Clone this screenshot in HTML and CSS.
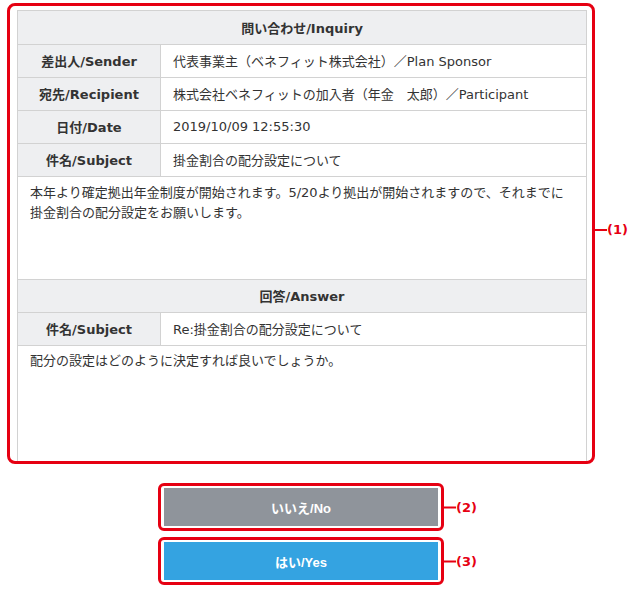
FILE: index.html
```html
<!DOCTYPE html>
<html lang="ja">
<head>
    <meta charset="UTF-8">
    <meta name="viewport" content="width=device-width">
    <title>問い合わせ</title>
    <link rel="stylesheet" href="styles.css">
</head>
<body>
<div class="page">
    <div class="frame">
        <div class="sheet">
            <div class="sec-head">問い合わせ/Inquiry</div>
            <div class="row">
                <div class="label">差出人/Sender</div>
                <div class="value">代表事業主（ベネフィット株式会社）／Plan Sponsor</div>
            </div>
            <div class="row">
                <div class="label">宛先/Recipient</div>
                <div class="value">株式会社ベネフィットの加入者（年金　太郎）／Participant</div>
            </div>
            <div class="row">
                <div class="label">日付/Date</div>
                <div class="value">2019/10/09 12:55:30</div>
            </div>
            <div class="row">
                <div class="label">件名/Subject</div>
                <div class="value">掛金割合の配分設定について</div>
            </div>
            <div class="msg">本年より確定拠出年金制度が開始されます。5/20より拠出が開始されますので、それまでに<br>掛金割合の配分設定をお願いします。</div>

            <div class="sec-head sec-answer">回答/Answer</div>
            <div class="row">
                <div class="label">件名/Subject</div>
                <div class="value">Re:掛金割合の配分設定について</div>
            </div>
            <div class="msg msg-last">配分の設定はどのように決定すれば良いでしょうか。</div>
        </div>
        <span class="callout callout-frame"><i></i>(1)</span>
    </div>

    <div class="actions">
        <div class="btn-frame">
            <button class="btn btn-no" type="button">いいえ/No</button>
            <span class="callout"><i></i>(2)</span>
        </div>
        <div class="btn-frame">
            <button class="btn btn-yes" type="button">はい/Yes</button>
            <span class="callout"><i></i>(3)</span>
        </div>
    </div>
</div>
</body>
</html>
```

FILE: styles.css
```css
*{
    margin: 0;
    padding: 0;
    box-sizing: border-box;
}
body{
    font-family: "DejaVu Sans", "Noto Sans CJK JP", sans-serif;
    font-size: 13px;
    color: #333;
    background: #fff;
}
.page{
    width: 588px;
    margin: 3px 0 0 7px;
}
/* 赤枠 */
.frame{
    position: relative;
    height: 461px;
    border: 3px solid #e60012;
    border-radius: 8px;
    padding: 4px 5px 0 7px;
}
.sheet{
    height: 100%;
    display: flex;
    flex-direction: column;
    border: 1px solid #d2d2d2;
    border-bottom: none;
}
.sec-head{
    height: 34px;
    display: flex;
    align-items: center;
    justify-content: center;
    background-color: #eeeff1;
    border-bottom: 1px solid #d2d2d2;
    font-weight: bold;
}
.sec-head.sec-answer{
    height: 33px;
    padding-bottom: 1px;
}
.row{
    height: 33px;
    display: flex;
    border-bottom: 1px solid #d2d2d2;
}
.label{
    width: 143px;
    display: flex;
    align-items: center;
    justify-content: center;
    padding-bottom: 1px;
    background-color: #eeeff1;
    border-right: 1px solid #d2d2d2;
    font-weight: bold;
}
.value{
    flex: 1;
    display: flex;
    align-items: center;
    padding: 0 0 1px 12px;
    white-space: nowrap;
}
.msg{
    height: 103px;
    padding: 6px 12px 0;
    line-height: 20px;
    border-bottom: 1px solid #d2d2d2;
}
.msg.msg-last{
    flex: 1;
    height: auto;
    padding-top: 5px;
    border-bottom: none;
}
/* 注記 */
.callout{
    position: absolute;
    left: calc(100% + 3px);
    top: 50%;
    transform: translateY(-50%);
    display: flex;
    align-items: center;
    color: #e60012;
    font-family: "DejaVu Sans", sans-serif;
    font-weight: bold;
    font-size: 13px;
    white-space: nowrap;
}
.callout i{
    width: 12px;
    height: 2px;
    background-color: #e60012;
}
.callout.callout-frame{
    top: 216px;
    transform: none;
}
/* ボタン */
.actions{
    margin-top: 19px;
    display: flex;
    flex-direction: column;
    align-items: center;
    gap: 6px;
}
.btn-frame{
    position: relative;
    border: 3px solid #e60012;
    border-radius: 6px;
    padding: 2px 3px;
}
.btn{
    display: block;
    width: 274px;
    height: 38px;
    border: none;
    color: #fff;
    font-family: "Liberation Sans", "Noto Sans CJK JP", sans-serif;
    font-size: 13px;
    font-weight: bold;
}
.btn-no{
    background-color: #8f949b;
}
.btn-yes{
    background-color: #34a3e1;
}
```
